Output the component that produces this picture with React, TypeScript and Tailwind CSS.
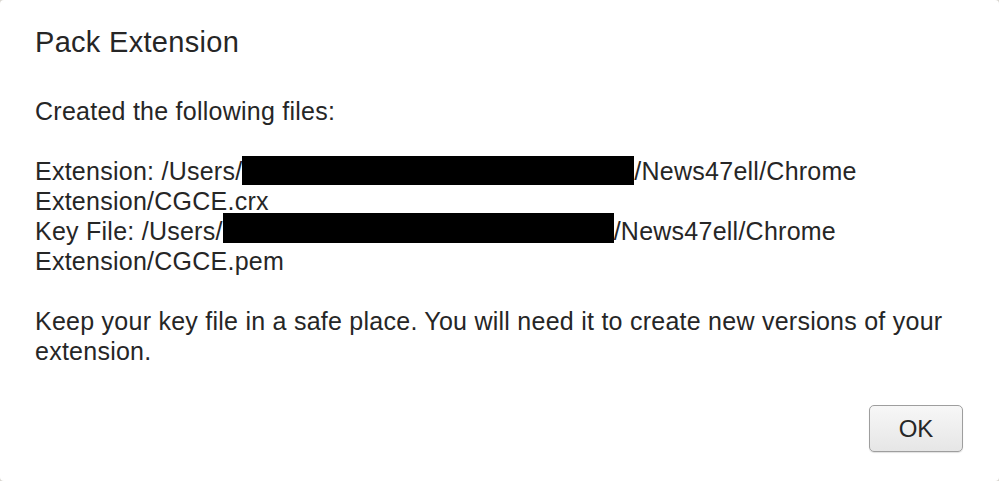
export default function App() {
  return (
    <div className="h-[481px] w-[999px] bg-[#d9d6d0]">
      <div
        className="flex h-full w-full flex-col rounded-[4px] bg-white pl-[35px] pr-[30px] text-[#262626]"
        style={{ fontFamily: '"Liberation Sans", Arial, sans-serif' }}
      >
        <h1 className="pt-[26px] text-[29px] leading-[32px] tracking-[0.3px]">Pack Extension</h1>

        <div className="mt-[38px] text-[25px] leading-[30px] tracking-[0.25px]">
          <p>Created the following files:</p>

          <p className="mt-[30px]">
            Extension: /Users/
            <span className="inline-block h-[29px] w-[392px] align-top bg-black" />
            /News47ell/Chrome
            <br />
            Extension/CGCE.crx
            <br />
            Key File: /Users/
            <span className="relative -top-[3px] inline-block h-[30px] w-[391px] align-top bg-black" />
            /News47ell/Chrome
            <br />
            Extension/CGCE.pem
          </p>

          <p className="mt-[30px]">
            Keep your key file in a safe place. You will need it to create new versions of your
            <br />
            extension.
          </p>
        </div>

        <div className="mt-auto flex justify-end pb-[29px] pr-[6px]">
          <button className="h-[47px] w-[94px] rounded-[5px] border border-[#9e9e9e] bg-gradient-to-b from-[#f7f7f7] to-[#e6e6e6] text-[24px] text-[#262626] shadow-[0_1px_1px_rgba(0,0,0,0.12)]">
            OK
          </button>
        </div>
      </div>
    </div>
  );
}
